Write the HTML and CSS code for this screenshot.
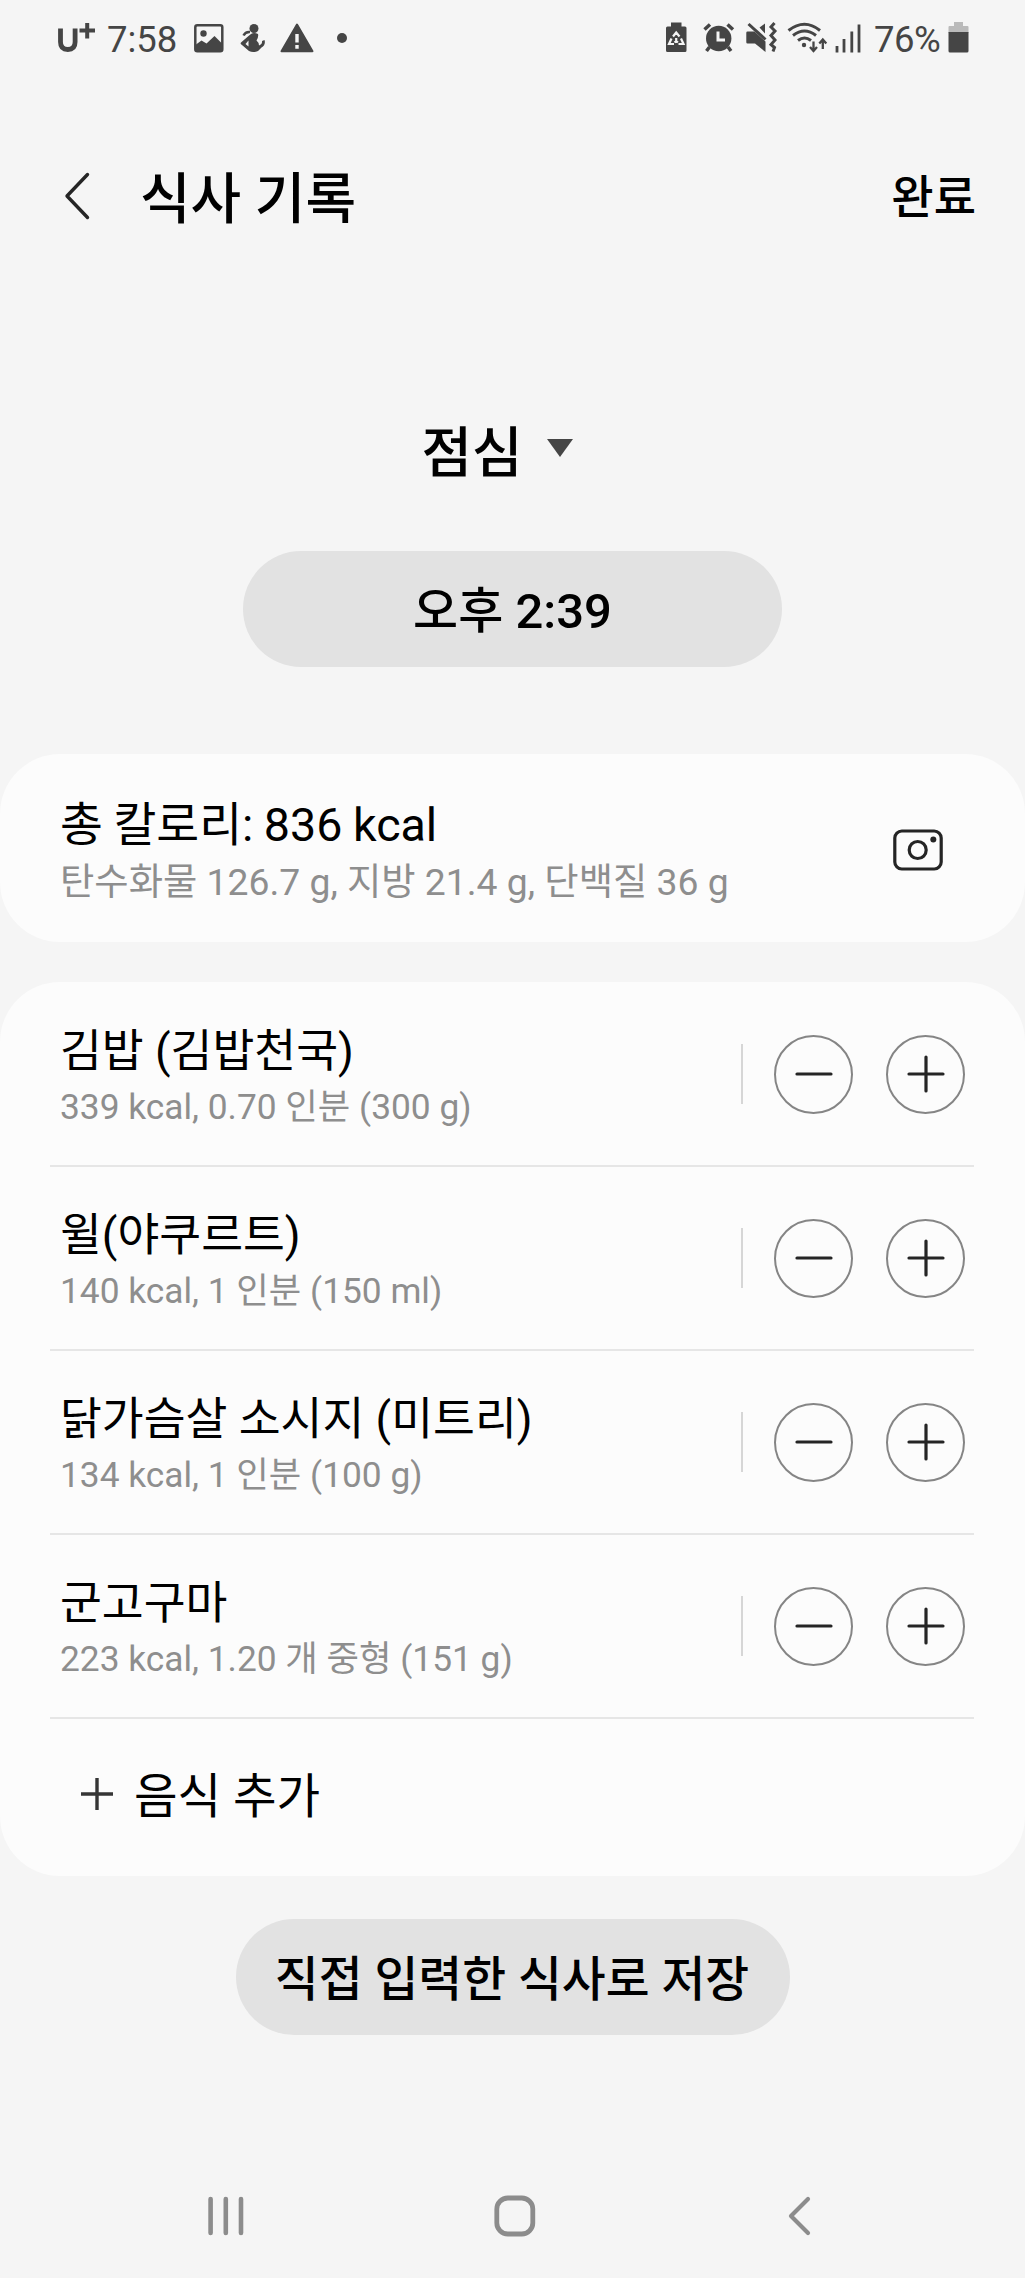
FILE: index.html
```html
<!DOCTYPE html>
<html lang="ko">
<head>
<meta charset="utf-8">
<title>식사 기록</title>
<link rel="stylesheet" href="styles.css">
</head>
<body>
<div class="screen">
  <div class="status">
    <svg class="carrier" width="40" height="40" viewBox="0 0 40 40" fill="none" stroke="#454545">
      <path d="M5.500 10.500v13.500q0 7.500 7.300 7.500t7.300-7.500v-13.500" stroke-width="4.800"/>
      <path d="M24.500 12.500h15.500M32.200 5v15.500" stroke-width="4"/>
    </svg>
    <span class="clock">7:58</span>
    <svg class="i-photo" width="30" height="30" viewBox="0 0 30 30">
      <rect x="1.300" y="2.300" width="27" height="26" rx="2" fill="none" stroke="#454545" stroke-width="2.500"/>
      <circle cx="9.500" cy="10.500" r="3.200" fill="#454545"/>
      <path d="M2 21.500l5.500-4 5 3 8-7.500 8 8v7H2z" fill="#454545"/>
    </svg>
    <svg class="i-person" width="26" height="30" viewBox="0 0 26 30" fill="#454545">
      <circle cx="14" cy="5.500" r="4.500"/>
      <path d="M11 11q3-2 7 0 .800 3-1.500 6.500 2.500 2 2.500 5 3.500-1 3-4.500l2.500-1q1.500 5-3 7.500l-3.500 3.500q-5 2-9 0L.800 21q-.500-1 .500-1.800L8.500 13z"/>
      <path d="M3.500 12.500q2-4 6.500-3.500" fill="none" stroke="#454545" stroke-width="2.500"/>
      <path d="M8.500 17.500L5.500 21l3 2.500z" fill="#f5f5f5"/>
    </svg>
    <svg class="i-warn" width="34" height="30" viewBox="0 0 34 30">
      <path d="M17 1.500L32.500 28.200H1.500z" fill="#454545" stroke="#454545" stroke-width="2" stroke-linejoin="round"/>
      <path d="M17 11v8.500M17 22v3.800" stroke="#f5f5f5" stroke-width="3.400"/>
    </svg>
    <span class="dot"></span>
    <span class="grow"></span>
    <svg class="i-system" width="200" height="36" viewBox="660 20 200 36" fill="none" stroke="#454545">
      <path d="M671 22.500h10.500v4h3.500q1.500 0 1.500 1.500v22.500q0 1.500-1.500 1.500h-17.500q-1.500 0-1.500-1.500V28q0-1.500 1.500-1.500h3.500z" fill="#454545" stroke="none"/>
      <path d="M673 36.500l3.200-4 3.300 4M671.500 38.500l-2.500 5.500h5M681 38.500l2.500 5.500h-5M676.200 38v3.500M674.500 42.500l1.700-1.500 1.700 1.500" stroke="#f5f5f5" stroke-width="2.200"/>
      <circle cx="718.700" cy="38.500" r="12.700" fill="#454545" stroke="none"/>
      <path d="M704.500 29.500l5.500-5M733 29.500l-5.500-5M709.500 47l-3 4M728 47l3 4" stroke-width="3.500"/>
      <path d="M718 31.500v8.500h7" stroke="#f5f5f5" stroke-width="3"/>
      <path d="M747.500 31.500h7l11 10v10.500l-10.500-8.500h-7.500q-1.200 0-1.200-1.200v-9.600q0-1.200 1.200-1.200zM759.500 27.500l5.500-4v10z" fill="#454545" stroke="none"/>
      <path d="M748.500 24l17 15.500" stroke-width="3"/>
      <path d="M774.500 23l-3.500 4 4 4-4 4.500 4 4.500-4 4.500 3.500 3-1.500 4" stroke-width="3"/>
      <path d="M788.500 30.500q16-12.500 31.500 0M793 35.500q11.500-9 23 0M798 40.500q6.500-5 13 0" stroke-width="3"/>
      <circle cx="804" cy="45" r="2.200" fill="#454545" stroke="none"/>
      <path d="M813.500 41.500v9M810 47l3.500 4 3.500-4M822.800 49v-9M819.300 43.500l3.500-4 3.500 4" stroke-width="2.300"/>
      <path d="M837 46v6.500M844 39v13.500M851.800 31.500v21M859 24.500v28" stroke-width="2.800"/>
    </svg>
    <span class="percent">76%</span>
    <svg class="i-battery" width="21" height="32" viewBox="0 0 21 32">
      <path d="M6 0h9v4h4.500q1 0 1 1v6H.500V5q0-1 1-1H6z" fill="#bababa"/>
      <path d="M.500 10h20v19q0 1.500-1.500 1.500H2q-1.500 0-1.500-1.500z" fill="#454545"/>
    </svg>
  </div>

  <header class="header">
    <svg class="back" width="26" height="48" viewBox="0 0 26 48" fill="none" stroke="#252525" stroke-width="3.400" stroke-linecap="round" stroke-linejoin="round"><path d="M23.500 2.500L3 24l20.500 21.500"/></svg>
    <h1 class="title">식사 기록</h1>
    <span class="done">완료</span>
  </header>

  <div class="meal">
    <span class="meal-name">점심</span>
    <svg class="caret" width="26" height="18" viewBox="0 0 26 18"><path d="M0 0h26L13 18z" fill="#454545"/></svg>
  </div>

  <button class="pill time">오후 2:39</button>

  <section class="card summary">
    <div class="text">
      <div class="total">총 칼로리: 836 kcal</div>
      <div class="macros">탄수화물 126.7 g, 지방 21.4 g, 단백질 36 g</div>
    </div>
    <svg class="camera" width="50" height="42" viewBox="0 0 50 42" fill="none" stroke="#252525" stroke-width="3.200">
      <rect x="1.800" y="2" width="46.400" height="38" rx="7"/>
      <circle cx="24.700" cy="21" r="8.500"/>
      <circle cx="40.300" cy="10.500" r="3" fill="#252525" stroke="none"/>
    </svg>
  </section>

  <section class="card foods">
    <div class="food">
      <div class="text"><div class="name">김밥 (김밥천국)</div><div class="detail">339 kcal, 0.70 인분 (300 g)</div></div>
      <span class="bar"></span>
      <span class="round"><svg width="38" height="38" viewBox="0 0 38 38"><path d="M2 19h34"/></svg></span>
      <span class="round"><svg width="38" height="38" viewBox="0 0 38 38"><path d="M2 19h34M19 2v34"/></svg></span>
    </div>
    <div class="food">
      <div class="text"><div class="name">윌(야쿠르트)</div><div class="detail">140 kcal, 1 인분 (150 ml)</div></div>
      <span class="bar"></span>
      <span class="round"><svg width="38" height="38" viewBox="0 0 38 38"><path d="M2 19h34"/></svg></span>
      <span class="round"><svg width="38" height="38" viewBox="0 0 38 38"><path d="M2 19h34M19 2v34"/></svg></span>
    </div>
    <div class="food">
      <div class="text"><div class="name">닭가슴살 소시지 (미트리)</div><div class="detail">134 kcal, 1 인분 (100 g)</div></div>
      <span class="bar"></span>
      <span class="round"><svg width="38" height="38" viewBox="0 0 38 38"><path d="M2 19h34"/></svg></span>
      <span class="round"><svg width="38" height="38" viewBox="0 0 38 38"><path d="M2 19h34M19 2v34"/></svg></span>
    </div>
    <div class="food">
      <div class="text"><div class="name">군고구마</div><div class="detail">223 kcal, 1.20 개 중형 (151 g)</div></div>
      <span class="bar"></span>
      <span class="round"><svg width="38" height="38" viewBox="0 0 38 38"><path d="M2 19h34"/></svg></span>
      <span class="round"><svg width="38" height="38" viewBox="0 0 38 38"><path d="M2 19h34M19 2v34"/></svg></span>
    </div>
    <div class="add">
      <svg width="32" height="32" viewBox="0 0 32 32" stroke="#353535" stroke-width="3.400"><path d="M0 16h32M16 0v32"/></svg>
      <span>음식 추가</span>
    </div>
  </section>

  <button class="pill save">직접 입력한 식사로 저장</button>

  <nav class="nav">
    <svg width="36" height="40" viewBox="0 0 36 40"><path d="M2.600 3v34M17.800 3v34M33 3v34" stroke-width="4.600"/></svg>
    <svg width="42" height="42" viewBox="0 0 42 42"><rect x="2.800" y="3" width="36" height="36" rx="11"/></svg>
    <svg width="24" height="42" viewBox="0 0 24 42"><path d="M21 4L4 21l17 17" stroke-width="4.200"/></svg>
  </nav>
</div>
</body>
</html>
```

FILE: styles.css
```css
* { box-sizing: border-box; }

body {
  margin: 0;
  background: #f5f5f5;
  color: #000;
  font-family: Roboto, "Noto Sans CJK KR", sans-serif;
}

svg { display: block; flex: none; }

.screen {
  display: flex;
  flex-direction: column;
  align-items: center;
  width: 1025px;
  height: 2278px;
  overflow: hidden;
}

.screen > * { flex: none; }

.status {
  display: flex;
  align-items: center;
  width: 100%;
  height: 76px;
  padding: 0 56px 0 55px;
  color: #454545;
}

.carrier { margin-right: 12px; padding-top: 0; }

.clock,
.percent {
  padding-top: 3px;
  font-size: 36.5px;
  font-weight: 400;
  line-height: 44px;
}

.clock { width: 87px; }
.i-photo { margin-right: 16px; }
.i-person { margin-right: 14px; }
.i-warn { margin-right: 23px; }

.dot {
  width: 10px;
  height: 10px;
  border-radius: 50%;
  background: #454545;
}

.grow { flex: 1; }
.i-system { overflow: visible; margin-right: 14px; }
.percent { width: 74px; letter-spacing: -0.5px; }

.header {
  display: flex;
  align-items: center;
  width: 100%;
  height: 100px;
  margin-top: 70px;
  padding: 0 49px 0 64px;
}

.back { margin-right: 50px; }

.title {
  flex: 1;
  margin: 0;
  padding-top: 6px;
  font-size: 55px;
  font-weight: 500;
  line-height: 64px;
}

.done {
  padding-top: 2px;
  font-size: 46px;
  font-weight: 500;
  line-height: 56px;
}

.meal {
  display: flex;
  align-items: center;
  height: 70px;
  margin-top: 172px;
  padding-right: 31px;
}

.meal-name {
  width: 125px;
  font-size: 55px;
  font-weight: 500;
  line-height: 70px;
}

.caret { margin-bottom: 10px; }

.pill {
  height: 116px;
  padding: 6px 0 0;
  border: 0;
  border-radius: 58px;
  background: #e2e2e2;
  color: #000;
  font: 500 49px/60px Roboto, "Noto Sans CJK KR", sans-serif;
  white-space: nowrap;
}

.time { width: 539px; margin-top: 63px; }

.card {
  width: 100%;
  border-radius: 60px;
  background: #fcfcfc;
}

.summary {
  display: flex;
  align-items: center;
  justify-content: space-between;
  height: 188px;
  margin-top: 87px;
  padding: 4px 82px 0 60px;
}

.text { white-space: nowrap; }
.summary .text { padding-top: 8px; }
.total { font-size: 46.600px; line-height: 56px; word-spacing: -1px; }
.macros { color: #8e8e8e; font-size: 37.300px; line-height: 58px; }

.foods { height: 894px; margin-top: 40px; padding: 1px 51px 0 50px; }

.food {
  display: flex;
  align-items: center;
  height: 184px;
  padding: 0 9px 0 10px;
  border-bottom: 2px solid #e6e6e6;
}

.food .text { flex: 1; padding-top: 9px; }
.name { font-size: 45.500px; line-height: 56px; }
.detail { color: #8e8e8e; font-size: 35.300px; line-height: 54px; }

.bar { width: 2px; height: 60px; margin-right: 31px; background: #d6d6d6; }

.round {
  display: flex;
  align-items: center;
  justify-content: center;
  width: 79px;
  height: 79px;
  border: 2px solid #858585;
  border-radius: 50%;
}

.round + .round { margin-left: 33px; }
.round svg { fill: none; stroke: #252525; stroke-width: 3.200; stroke-linecap: round; }

.add {
  display: flex;
  align-items: center;
  gap: 21px;
  height: 150px;
  padding-left: 31px;
  font-size: 47.400px;
  line-height: 56px;
}

.add span { padding-top: 6px; }

.save { width: 554px; margin-top: 43px; padding-right: 1px; font-size: 47.700px; }

.nav {
  display: flex;
  align-items: center;
  justify-content: space-between;
  width: 604px;
  height: 60px;
  margin: 151px 6px 0 0;
  padding-right: 1px;
}

.nav svg { fill: none; stroke: #8c8c8c; stroke-width: 4.800; stroke-linecap: round; stroke-linejoin: round; }
```
